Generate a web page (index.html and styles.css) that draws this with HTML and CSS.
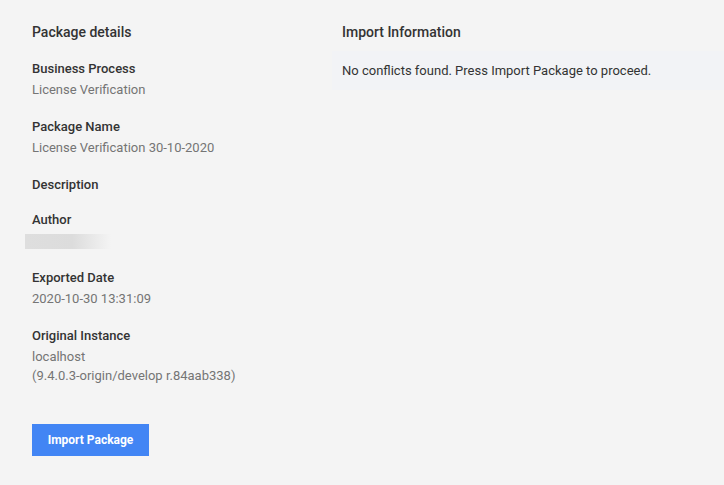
FILE: index.html
```html
<!DOCTYPE html>
<html lang="en">
<head>
<meta charset="utf-8">
<title>Import Package</title>
<link rel="stylesheet" href="styles.css">
</head>
<body>
  <div class="page">
    <section class="details">
      <h2 class="section-title">Package details</h2>

      <div class="field">
        <div class="field-label">Business Process</div>
        <div class="field-value">License Verification</div>
      </div>

      <div class="field">
        <div class="field-label">Package Name</div>
        <div class="field-value">License Verification 30-10-2020</div>
      </div>

      <div class="field field-empty">
        <div class="field-label">Description</div>
      </div>

      <div class="field field-author">
        <div class="field-label">Author</div>
        <div class="redacted"></div>
      </div>

      <div class="field">
        <div class="field-label">Exported Date</div>
        <div class="field-value">2020-10-30 13:31:09</div>
      </div>

      <div class="field">
        <div class="field-label">Original Instance</div>
        <div class="field-value">localhost<br>(9.4.0.3-origin/develop r.84aab338)</div>
      </div>

      <button class="btn-primary" type="button">Import Package</button>
    </section>

    <section class="import-info">
      <h2 class="section-title info-title">Import Information</h2>
      <div class="info-box">No conflicts found. Press Import Package to proceed.</div>
    </section>
  </div>
</body>
</html>
```

FILE: styles.css
```css
html, body {
  margin: 0;
  padding: 0;
  background: #f4f4f4;
  font-family: Roboto, "Liberation Sans", Arial, sans-serif;
  color: #333333;
}

.page {
  display: grid;
  grid-template-columns: 300px 1fr;
  padding: 22px 0 0 32px;
}

.section-title {
  margin: 0 0 17px;
  font-size: 14px;
  font-weight: 500;
  line-height: 20px;
  color: #333333;
}

.field {
  margin-bottom: 18px;
}

.field-empty {
  margin-bottom: 16px;
}

.field-label {
  font-size: 13px;
  font-weight: 500;
  line-height: 19px;
  color: #333333;
}

.field-value {
  margin-top: 2px;
  font-size: 13px;
  line-height: 19px;
  color: #757575;
}

.field-author {
  margin-bottom: 19px;
}

.redacted {
  margin: 5px 0 0 -7px;
  width: 86px;
  height: 15px;
  background: linear-gradient(90deg, #dedede 0%, #dcdcdc 55%, rgba(244, 244, 244, 0) 100%);
}

.btn-primary {
  margin-top: 21px;
  width: 117px;
  height: 32px;
  border: 0;
  border-radius: 0;
  background: #4285f4;
  color: #ffffff;
  font-family: inherit;
  font-size: 12px;
  font-weight: 700;
  cursor: pointer;
}

.info-title {
  margin: 0 0 9px;
  padding-left: 10px;
}

.info-box {
  padding: 10px;
  background: #f2f3f6;
  font-size: 13px;
  line-height: 19px;
  color: #333333;
}
```
